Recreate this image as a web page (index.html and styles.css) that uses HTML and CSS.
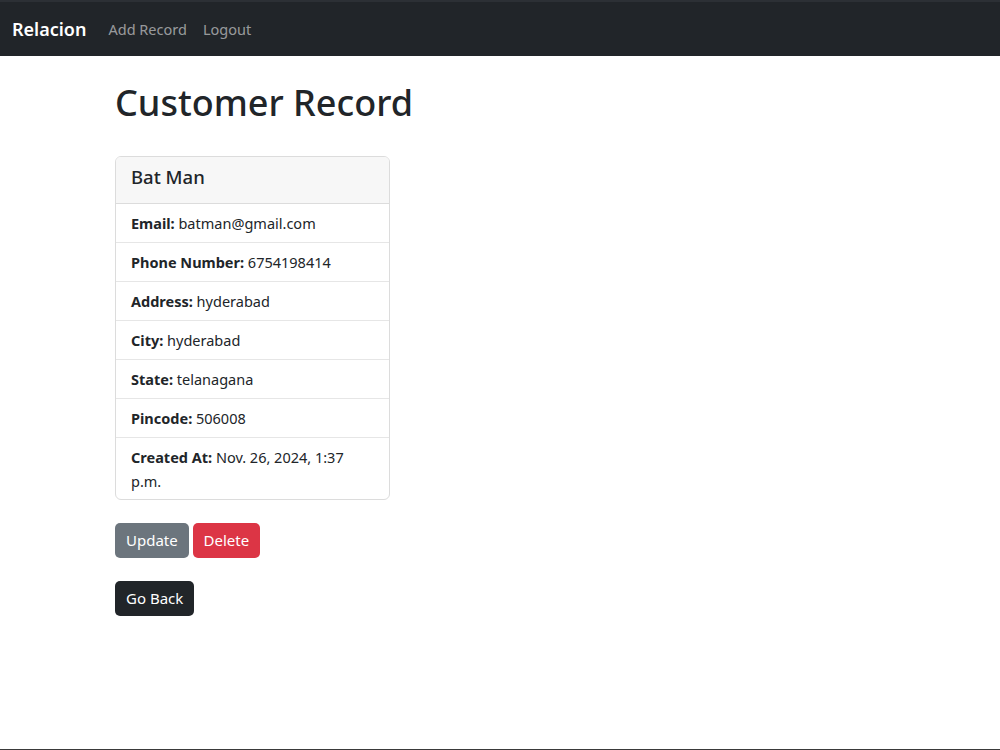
FILE: index.html
```html
<!DOCTYPE html>
<html lang="en">
<head>
  <meta charset="UTF-8">
  <meta name="viewport" content="width=device-width, initial-scale=1.0">
  <title>Customer Record</title>
  <link rel="stylesheet" href="styles.css">
</head>
<body>
  <nav class="navbar">
    <a class="brand" href="#">Relacion</a>
    <a class="nav-link" href="#">Add Record</a>
    <a class="nav-link" href="#">Logout</a>
  </nav>
  <div class="main">
    <h1>Customer Record</h1>
    <div class="card">
      <div class="card-header">Bat Man</div>
      <ul class="list">
        <li><strong>Email:</strong> batman@gmail.com</li>
        <li><strong>Phone Number:</strong> 6754198414</li>
        <li><strong>Address:</strong> hyderabad</li>
        <li><strong>City:</strong> hyderabad</li>
        <li><strong>State:</strong> telanagana</li>
        <li><strong>Pincode:</strong> 506008</li>
        <li><strong>Created At:</strong> Nov. 26, 2024, 1:37 p.m.</li>
      </ul>
    </div>
    <div class="actions">
      <a class="btn btn-grey" href="#">Update</a>
      <a class="btn btn-red" href="#">Delete</a>
    </div>
    <div class="actions">
      <a class="btn btn-dark" href="#">Go Back</a>
    </div>
  </div>
</body>
</html>
```

FILE: styles.css
```css
body{
  margin:0px;
  font-family:"Noto Sans", "Open Sans", sans-serif;
  font-size:14.5px;
  color:#212529;
  background-color:#fff;
}
/* thin frame line at the bottom of the window */
body::after{
  content:"";
  position:fixed;
  left:0;
  right:0;
  bottom:0;
  height:1px;
  background-color:#3a3a3a;
}
a{
  text-decoration:none;
}
.navbar{
  height:56px;
  background-color:#212529;
  border-top:2px solid #2c3035;
  box-sizing:border-box;
  display:flex;
  align-items:center;
  padding:0 12px;
}
.brand{
  color:#fff;
  font-size:18px;
  font-weight:600;
  margin-right:22px;
}
.nav-link{
  color:rgba(255,255,255,.55);
  font-size:14.5px;
  margin-right:16px;
}
.main{
  padding-left:115px;
}
h1{
  font-size:36px;
  font-weight:500;
  margin:25px 0 32px;
  line-height:1.2;
}
.card{
  width:273px;
  border:1px solid #dcdcdc;
  border-radius:6px;
  overflow:hidden;
}
.card-header{
  background-color:#f7f7f7;
  border-bottom:1px solid #dcdcdc;
  font-size:18.5px;
  font-weight:500;
  line-height:28px;
  padding:6px 15px 12px;
}
.list{
  list-style:none;
  margin:0;
  padding:0;
}
.list li{
  padding:7px 15px;
  line-height:24px;
  border-top:1px solid #e6e6e6;
}
.list li:first-child{
  border-top:none;
}
.list li:last-child{
  padding-bottom:6px;
}
.actions{
  margin-top:23px;
}
.btn{
  display:inline-block;
  color:#fff;
  font-size:15px;
  line-height:23px;
  padding:6px 11px;
  border-radius:5px;
}
.btn-grey{
  background-color:#6c757d;
}
.btn-red{
  background-color:#dc3545;
}
.btn-dark{
  background-color:#212529;
}
```
